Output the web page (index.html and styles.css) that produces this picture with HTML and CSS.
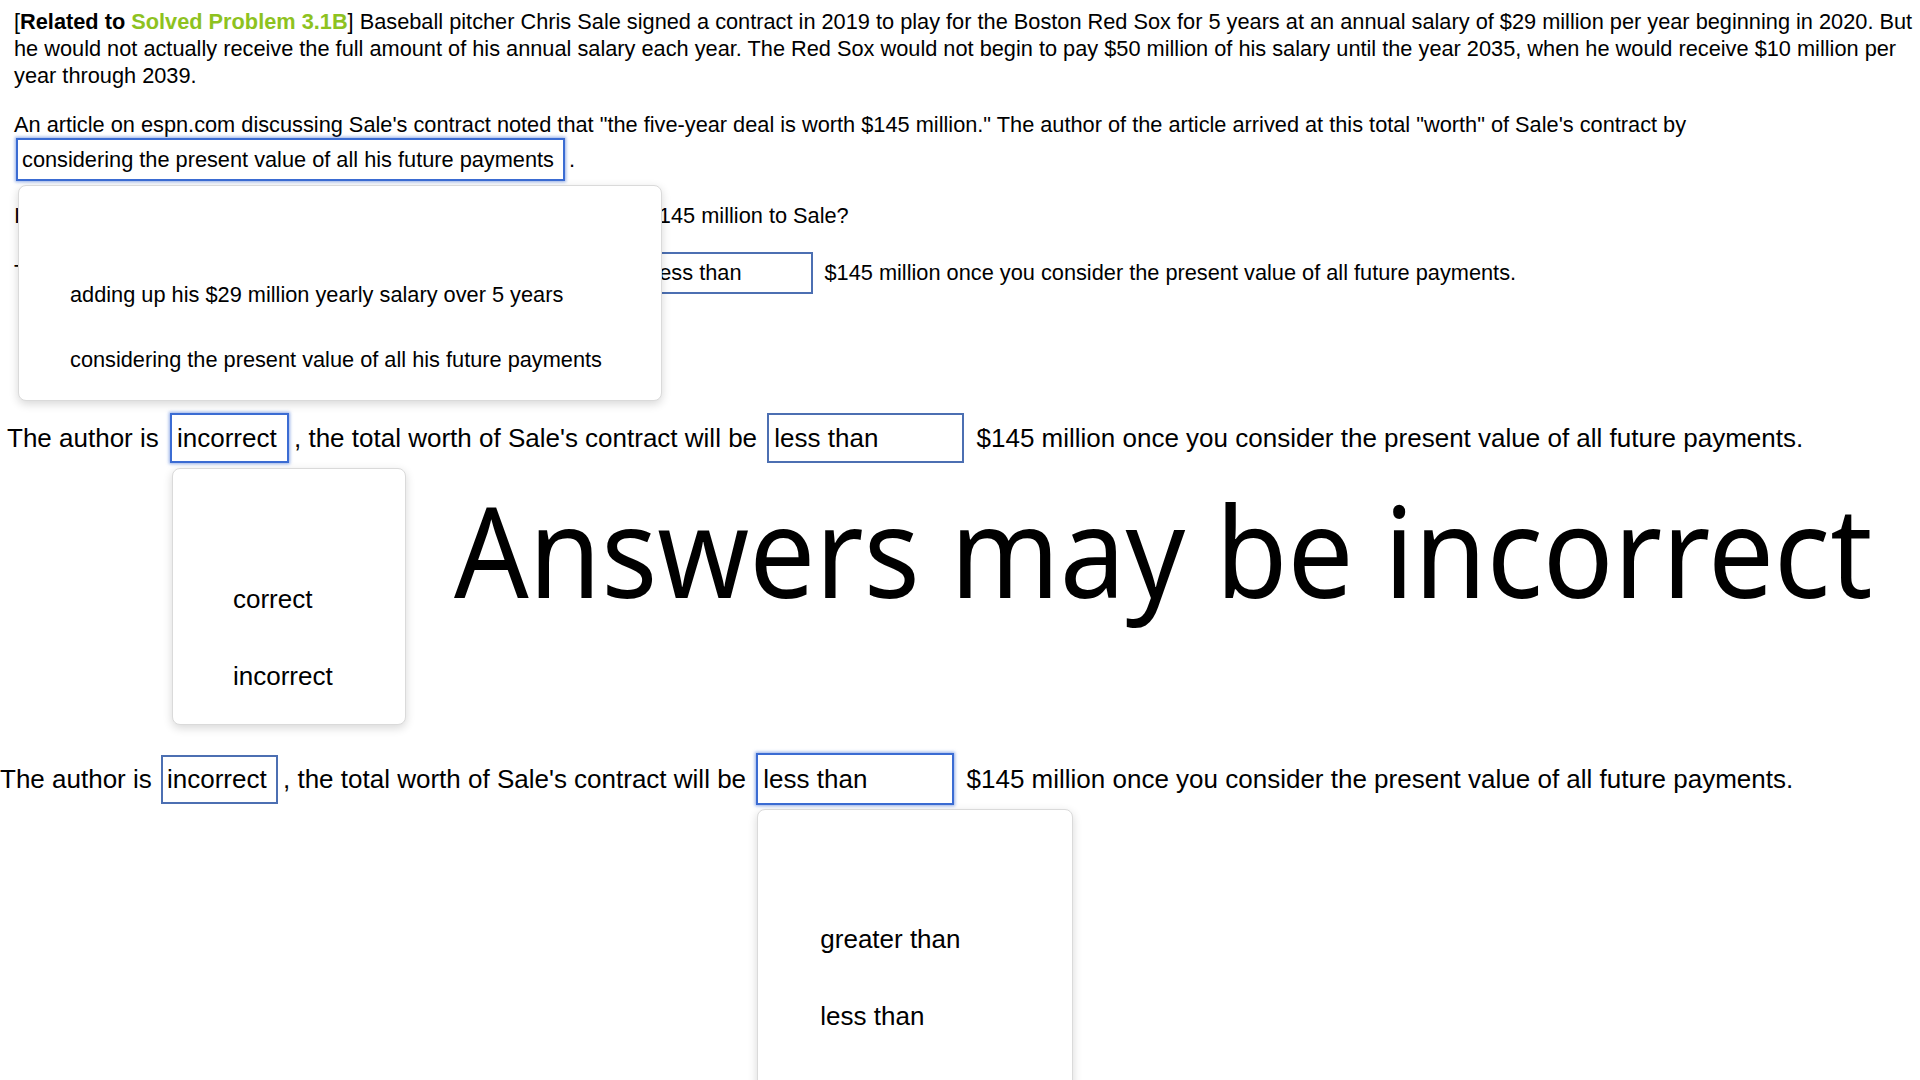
FILE: index.html
```html
<!DOCTYPE html>
<html lang="en">
<head>
<meta charset="utf-8">
<title>Related to Solved Problem 3.1B</title>
<link rel="stylesheet" href="styles.css">
</head>
<body>
<main class="page">
  <section class="problem">
    <div class="para">[<b>Related to <span class="ref">Solved Problem 3.1B</span></b>] Baseball pitcher Chris Sale signed a contract in 2019 to play for the Boston Red Sox for 5 years at an annual salary of $29 million per year beginning in 2020. But he would not actually receive the full amount of his annual salary each year. The Red Sox would not begin to pay $50 million of his salary until the year 2035, when he would receive $10 million per year through 2039.</div>
    <div class="para para-2">An article on espn.com discussing Sale's contract noted that "the five-year deal is worth $145 million." The author of the article arrived at this total "worth" of Sale's contract by <span class="select sel-method focused">considering the present value of all his future payments<ul class="menu menu-1"><li>adding up his $29 million yearly salary over 5 years</li><li>considering the present value of all his future payments</li></ul></span>.</div>
    <div class="para question">Is the author correct in claiming that Sale's five-year deal is worth $145 million to Sale?</div>
    <div class="para answer-small">The author is <span class="select sm-a">incorrect</span>, the total worth of Sale's contract will be <span class="select sm-b">less than</span> $145 million once you consider the present value of all future payments.</div>
  </section>

  <section class="row row-3">The author is <span class="select r3-a focused">incorrect<ul class="menu menu-2"><li>correct</li><li>incorrect</li></ul></span>, the total worth of Sale's contract will be <span class="select r3-b">less than</span> $145 million once you consider the present value of all future payments.</section>

  <div class="watermark"><span class="watermark-text">Answers may be incorrect</span></div>

  <section class="row row-4">The author is <span class="select r4-a">incorrect</span>, the total worth of Sale's contract will be <span class="select r4-b focused">less than<ul class="menu menu-3"><li>greater than</li><li>less than</li></ul></span> $145 million once you consider the present value of all future payments.</section>
</main>
</body>
</html>
```

FILE: styles.css
```css
html, body {
  margin: 0;
  padding: 0;
  background: #ffffff;
  overflow: hidden;
}

body {
  width: 1920px;
  height: 1080px;
  font-family: "Liberation Sans", Arial, Helvetica, sans-serif;
  color: #000000;
}

.page {
  position: relative;
  height: 1080px;
  overflow: hidden;
}

/* ---------- problem text ---------- */
.problem {
  padding: 8px 2px 0 14px;
  font-size: 21.75px;
  line-height: 27px;
}

.para {
  margin: 0;
}

.para-2 {
  margin-top: 22px;
}

.ref {
  color: #8ec21f;
}

.question {
  margin-top: 21px;
}

.answer-small {
  margin-top: 23px;
  line-height: 42px;
  white-space: nowrap;
}

/* ---------- select boxes ---------- */
.select {
  position: relative;
  display: inline-block;
  box-sizing: border-box;
  border: 2px solid #4c6fb2;
  background: #ffffff;
  white-space: nowrap;
  vertical-align: baseline;
}

.focused {
  border-color: #3b6cd3;
  box-shadow: 0 0 3px 1px rgba(59, 108, 211, 0.55);
}

.sel-method {
  width: 549px;
  height: 43px;
  line-height: 39px;
  margin: 0 4px 0 2px;
  padding: 0 4px;
}

.sm-a {
  width: 99px;
  height: 42px;
  line-height: 38px;
  margin: 0 4px 0 3px;
  padding: 0 5px;
}

.sm-b {
  width: 166px;
  height: 42px;
  line-height: 38px;
  margin: 0 5px 0 1px;
  padding: 0 5px;
}

/* ---------- large rows ---------- */
.row {
  font-size: 26px;
  white-space: nowrap;
}

.row-3 {
  margin-top: 119px;
  padding-left: 7px;
  line-height: 50px;
}

.r3-a {
  width: 119px;
  height: 50px;
  line-height: 46px;
  margin: 0 5px 0 4px;
  padding: 0 5px;
}

.r3-b {
  width: 197px;
  height: 50px;
  line-height: 46px;
  margin: 0 5px 0 3px;
  padding: 0 5px;
}

.row-4 {
  margin-top: 135px;
  padding-left: 0;
  line-height: 48px;
}

.r4-a {
  width: 117px;
  height: 49px;
  line-height: 45px;
  margin: 0 5px 0 2px;
  padding: 0 4px;
}

.r4-b {
  width: 198px;
  height: 52px;
  line-height: 48px;
  margin: 0 5px 0 3px;
  padding: 0 5px;
}

/* ---------- dropdown menus ---------- */
.menu {
  position: absolute;
  z-index: 10;
  margin: 0;
  list-style: none;
  box-sizing: border-box;
  background: #ffffff;
  border: 1px solid #dadada;
  border-radius: 8px;
  box-shadow: 0 3px 10px rgba(0, 0, 0, 0.16);
  white-space: nowrap;
  color: #000000;
}

.menu-1 {
  left: 0;
  top: calc(100% + 6px);
  width: 644px;
  padding: 76px 0 8px 51px;
  font-size: 21.75px;
}

.menu-1 li {
  line-height: 65px;
}

.menu-2 {
  left: 0;
  top: calc(100% + 7px);
  width: 234px;
  padding: 92px 0 9px 60px;
  font-size: 26px;
}

.menu-2 li,
.menu-3 li {
  line-height: 77px;
}

.menu-3 {
  left: -1px;
  top: calc(100% + 6px);
  width: 316px;
  height: 320px;
  padding: 91px 0 0 62px;
  font-size: 26px;
}

/* ---------- overlay caption ---------- */
.watermark {
  margin-top: 17px;
  padding-left: 454px;
  font-family: "Noto Sans", "Open Sans", sans-serif;
  font-size: 127px;
  line-height: 138px;
  white-space: nowrap;
  color: #000000;
}

.watermark-text {
  display: inline-block;
  transform: scaleX(0.922);
  transform-origin: 0 50%;
}
```
